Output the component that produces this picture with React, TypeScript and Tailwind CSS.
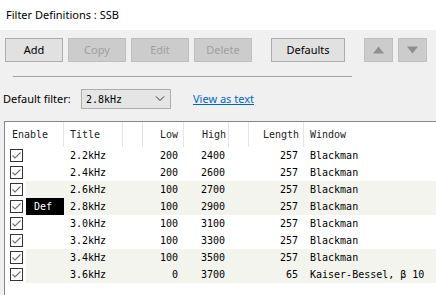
import React from "react";

const ui = { fontFamily: '"Noto Sans", "Liberation Sans", sans-serif' };
const mono = { fontFamily: '"DejaVu Sans Mono", "Liberation Mono", monospace' };

type Row = { title: string; low: string; high: string; len: string; win: string; def?: boolean };
const rows: Row[] = [
  { title: "2.2kHz", low: "200", high: "2400", len: "257", win: "Blackman" },
  { title: "2.4kHz", low: "200", high: "2600", len: "257", win: "Blackman" },
  { title: "2.6kHz", low: "100", high: "2700", len: "257", win: "Blackman" },
  { title: "2.8kHz", low: "100", high: "2900", len: "257", win: "Blackman", def: true },
  { title: "3.0kHz", low: "100", high: "3100", len: "257", win: "Blackman" },
  { title: "3.2kHz", low: "100", high: "3300", len: "257", win: "Blackman" },
  { title: "3.4kHz", low: "100", high: "3500", len: "257", win: "Blackman" },
  { title: "3.6kHz", low: "0", high: "3700", len: "65", win: "Kaiser-Bessel, β 10" },
];

function Btn({ label, w, disabled }: { label: string; w: string; disabled?: boolean }) {
  return (
    <div
      className={
        "h-[24px] flex items-center justify-center border text-[11px] " +
        w +
        (disabled
          ? " bg-[#cccccc] border-[#bfbfbf] text-[#a0a0a0]"
          : " bg-[#e1e1e1] border-[#adadad] text-black")
      }
      style={ui}
    >
      {label}
    </div>
  );
}

function ArrowBtn({ up }: { up?: boolean }) {
  return (
    <div className="h-[24px] w-[29px] flex items-center justify-center border bg-[#cccccc] border-[#bfbfbf]">
      <svg width="11" height="8" viewBox="0 0 11 8">
        {up ? <polygon points="5.5,0.5 11,7.5 0,7.5" fill="#8f8f8f" /> : <polygon points="0,0.5 11,0.5 5.5,7.5" fill="#8f8f8f" />}
      </svg>
    </div>
  );
}

function Check() {
  return (
    <div className="w-[13px] h-[13px] border border-[#333333] bg-white flex items-center justify-center">
      <svg width="11" height="11" viewBox="0 0 11 11">
        <polyline points="1.5,5.5 4,8 9.5,2.5" fill="none" stroke="#707070" strokeWidth="1.1" />
      </svg>
    </div>
  );
}

export default function App() {
  return (
    <div className="w-[436px] h-[295px] overflow-hidden bg-[#f0f0f0] flex flex-col text-black">
      <div className="h-[30px] bg-white flex items-center pl-[6px] text-[11px]" style={ui}>
        Filter Definitions : SSB
      </div>
      <div className="flex items-center mt-[8px] pl-[5px]">
        <div className="flex gap-[5px]">
          <Btn label="Add" w="w-[58px]" />
          <Btn label="Copy" w="w-[58px]" disabled />
          <Btn label="Edit" w="w-[58px]" disabled />
          <Btn label="Delete" w="w-[58px]" disabled />
        </div>
        <div className="ml-[19px]">
          <Btn label="Defaults" w="w-[74px]" />
        </div>
        <div className="ml-[19px] flex gap-[5px]">
          <ArrowBtn up />
          <ArrowBtn />
        </div>
      </div>
      <div className="ml-[13px] mt-[14px] w-[339px] h-[1px] bg-[#a0a0a0]" />
      <div className="flex items-center mt-[12px] h-[20px]">
        <div className="pl-[3px] w-[81px] text-[11px]" style={ui}>
          Default filter:
        </div>
        <div className="w-[90px] h-[20px] border border-[#adadad] bg-[#e5e5e5] flex items-center pl-[4px] pr-[5px] justify-between">
          <span className="text-[10px]" style={mono}>2.8kHz</span>
          <svg width="10" height="6" viewBox="0 0 10 6">
            <polyline points="1,0.5 5,4.5 9,0.5" fill="none" stroke="#333" strokeWidth="1" />
          </svg>
        </div>
        <div className="ml-[22px] text-[11px] text-[#0066cc] underline" style={ui}>
          View as text
        </div>
      </div>
      <div className="mt-[12px] ml-[4px] flex-1 bg-white border-t border-l border-[#828790]" style={mono}>
        <div className="flex h-[25px] items-center text-[10px] text-[#1e1e1e]">
          <div className="w-[59px] pl-[7px] h-full flex items-center border-r border-[#e5e5e5]">Enable</div>
          <div className="w-[59px] pl-[6px] h-full flex items-center border-r border-[#e5e5e5]">Title</div>
          <div className="w-[20px] h-full border-r border-[#e5e5e5]" />
          <div className="w-[41px] pr-[5px] h-full flex items-center justify-end border-r border-[#e5e5e5]">Low</div>
          <div className="w-[45px] pr-[2px] h-full flex items-center justify-end border-r border-[#e5e5e5]">High</div>
          <div className="w-[20px] h-full border-r border-[#e5e5e5]" />
          <div className="w-[55px] pr-[4px] h-full flex items-center justify-end border-r border-[#e5e5e5]">Length</div>
          <div className="pl-[6px] h-full flex items-center">Window</div>
        </div>
        {rows.map((r, i) => {
          const shaded = i === 2 || i === 3 || i === 6 || i === 7;
          return (
            <div key={i} className="flex h-[17px] items-center text-[10px]">
              <div className="w-[21px] h-full flex items-center pl-[5px]">
                <Check />
              </div>
              <div className={"flex-1 h-full flex items-center " + (shaded ? "bg-[#f4f4ef]" : "")}>
                <div className="w-[38px] h-full">
                  {r.def && (
                    <div className="w-[38px] h-full bg-black text-white flex items-center pl-[8px]">Def</div>
                  )}
                </div>
                <div className="w-[58px] pl-[6px]">{r.title}</div>
                <div className="w-[20px]" />
                <div className="w-[41px] pr-[5px] text-right">{r.low}</div>
                <div className="w-[45px] pr-[3px] text-right">{r.high}</div>
                <div className="w-[20px]" />
                <div className="w-[55px] pr-[5px] text-right">{r.len}</div>
                <div className="pl-[7px] whitespace-nowrap">{r.win}</div>
              </div>
            </div>
          );
        })}
      </div>
    </div>
  );
}
